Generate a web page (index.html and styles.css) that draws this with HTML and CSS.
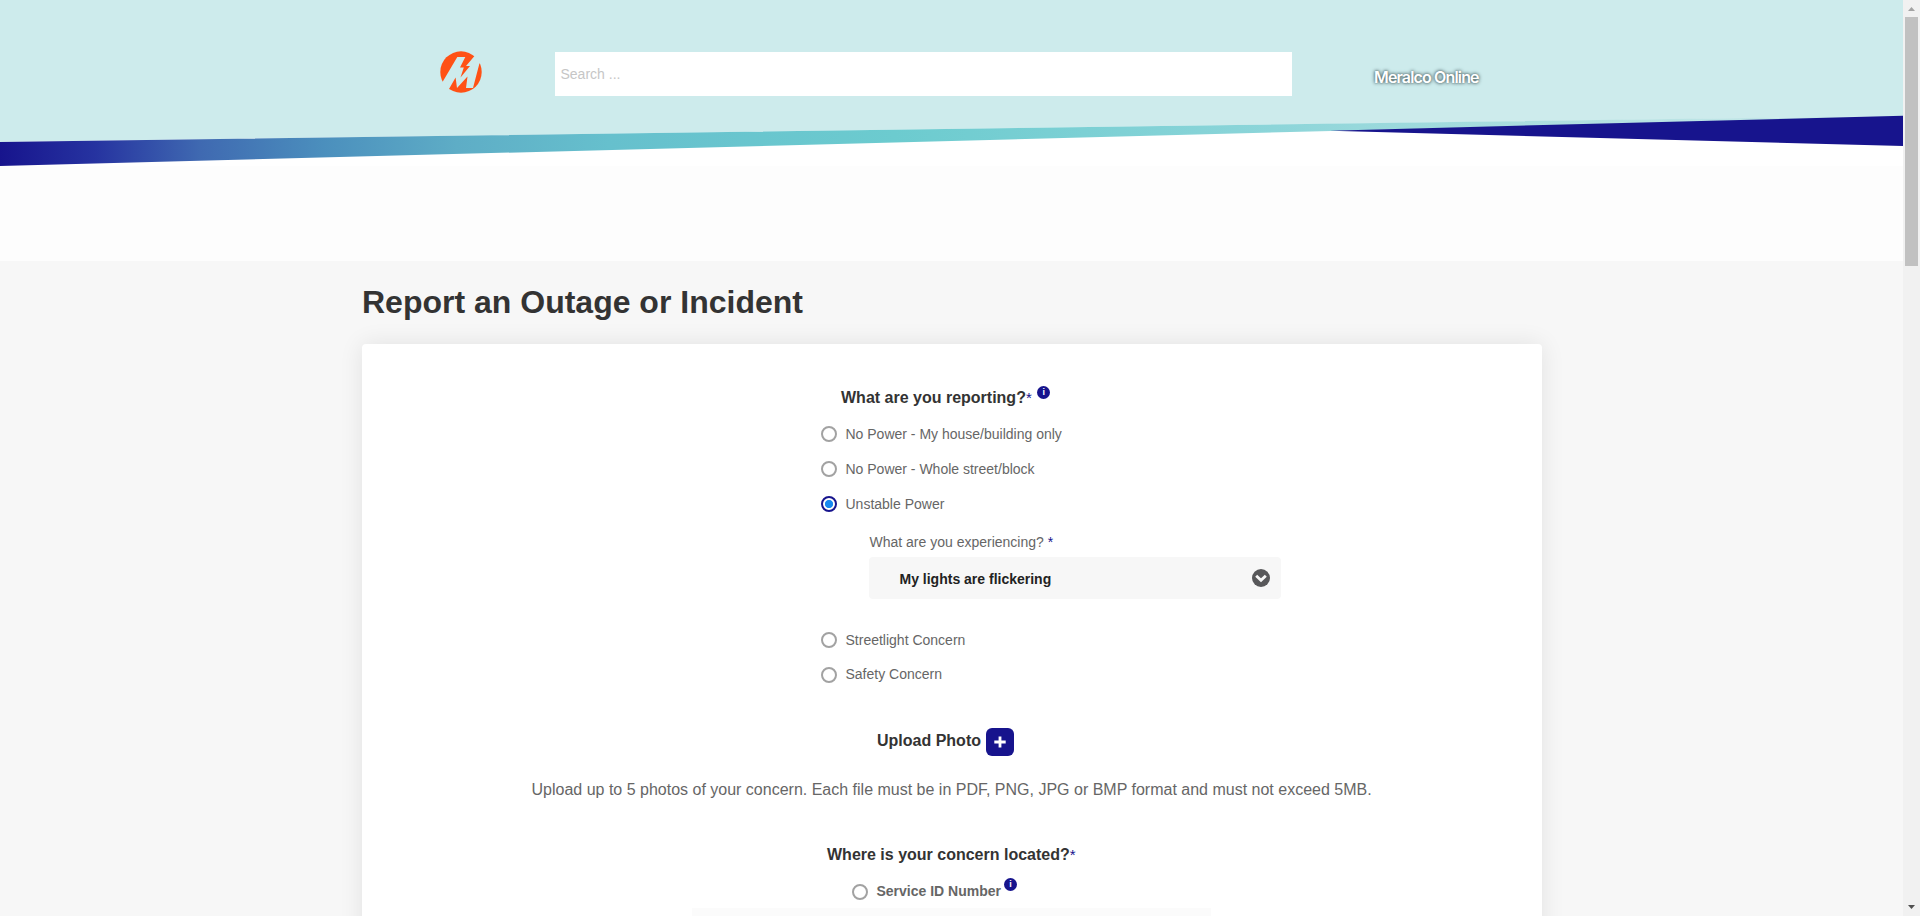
FILE: index.html
```html
<!DOCTYPE html>
<html lang="en">
<head>
<meta charset="utf-8">
<title>Report an Outage or Incident</title>
<link rel="stylesheet" href="styles.css">
</head>
<body>
<div class="window">
  <div class="page">
    <header class="header">
      <svg class="header-art" viewBox="0 0 1903 166" width="1903" height="166">
        <defs>
          <linearGradient id="band" x1="0" y1="0" x2="1903" y2="0" gradientUnits="userSpaceOnUse">
            <stop offset="0" stop-color="#17148d"/>
            <stop offset=".05" stop-color="#2633a0"/>
            <stop offset=".105" stop-color="#3f69b1"/>
            <stop offset=".17" stop-color="#4b8fbd"/>
            <stop offset=".24" stop-color="#5eadc6"/>
            <stop offset=".32" stop-color="#66c0cd"/>
            <stop offset=".47" stop-color="#6ccbcf"/>
            <stop offset=".67" stop-color="#8cd5d9"/>
            <stop offset=".82" stop-color="#b0dfe0"/>
            <stop offset="1" stop-color="#cdebec"/>
          </linearGradient>
        </defs>
        <path d="M0 0H1903V116L0 142Z" fill="#cdebec"/>
        <path d="M0 142L1903 115.7V117L1331 131L0 166Z" fill="url(#band)"/>
        <path d="M1330 130.7L1903 115.7V146Z" fill="#17148d"/>
      </svg>
      <div class="header-bar">
        <svg class="logo" viewBox="0 0 42 42" width="42" height="42">
          <circle cx="21" cy="21" r="20.7" fill="#ff5115"/>
          <path d="M-1 34L2.500 31L17.300 6H25.300L20 16.500H23.800L20.500 26.500L30 15H26L34.500 5L38 1L42 9L39.300 13L33 37H26L27.500 25.500L17 37L15.600 26.500L9 38L7 42Z" fill="#cdebec"/>
        </svg>
        <div class="search">Search ...</div>
        <div class="brand">Meralco Online</div>
      </div>
    </header>
    <main class="content">
      <h1 class="title">Report an Outage or Incident</h1>
      <section class="card">
        <h2 class="question q-report"><span>What are you reporting?</span><span class="req">*</span><span class="info">i</span></h2>
        <div class="options">
          <label class="option"><span class="radio"></span><span>No Power - My house/building only</span></label>
          <label class="option"><span class="radio"></span><span>No Power - Whole street/block</span></label>
          <label class="option"><span class="radio checked"></span><span>Unstable Power</span></label>
          <div class="detail">
            <div class="detail-label">What are you experiencing? <span class="blue">*</span></div>
            <div class="select">
              <span class="select-value">My lights are flickering</span>
              <svg viewBox="0 0 18 18" width="18" height="18"><circle cx="9" cy="9" r="9" fill="#58585a"/><path d="M4.200 6.800L9 11.300L13.800 6.800" fill="none" stroke="#f7f7f7" stroke-width="2.900"/></svg>
            </div>
          </div>
          <label class="option"><span class="radio"></span><span>Streetlight Concern</span></label>
          <label class="option"><span class="radio"></span><span class="raised">Safety Concern</span></label>
        </div>
        <div class="upload">
          <h2 class="question">Upload Photo</h2>
          <span class="add"><svg viewBox="0 0 12 12" width="12" height="12"><path d="M6 .5V11.500M.3 6H11.700" stroke="#fff" stroke-width="2.800"/></svg></span>
        </div>
        <p class="hint">Upload up to 5 photos of your concern. Each file must be in PDF, PNG, JPG or BMP format and must not exceed 5MB.</p>
        <h2 class="question q-where"><span>Where is your concern located?</span><span class="req">*</span></h2>
        <label class="option service"><span class="radio"></span><span class="raised">Service ID Number</span><span class="info">i</span></label>
        <div class="field"></div>
      </section>
    </main>
  </div>
  <div class="scrollbar">
    <svg viewBox="0 0 17 17" width="17" height="17"><path d="M5 11L8.500 7L12 11Z" fill="#a3a3a3"/></svg>
    <div class="thumb"></div>
    <svg viewBox="0 0 17 17" width="17" height="17"><path d="M5 6L8.500 10L12 6Z" fill="#505050"/></svg>
  </div>
</div>
</body>
</html>
```
FILE: styles.css
```css
* { box-sizing: border-box; }
body { margin: 0; font-family: "Liberation Sans", Arial, sans-serif; color: #333; }
.window { display: flex; width: 1920px; height: 916px; overflow: hidden; }
.page { width: 1903px; height: 916px; overflow: hidden; background: #f7f7f7; }
.header { position: relative; height: 261px; background: linear-gradient(#fff 166px, #fdfdfd 166px); }
.header-art { position: absolute; left: 0; top: 0; }
.header-bar { position: relative; display: flex; align-items: flex-start; padding: 51px 0 0 440px; }
.logo { display: block; }
.search { width: 737px; height: 44px; margin: 1px 82px 0 73px; padding-left: 5.5px; background: #fff; color: #c6c6c6; font-size: 14px; line-height: 44px; }
.brand { margin-top: 16px; font: 600 16px/20px "Inter", sans-serif; letter-spacing: -.85px; color: #fff; text-shadow: 0 0 3px #3f5558, 0 0 4px #6b8587; white-space: nowrap; }
.content { width: 1180px; margin: 0 0 0 362px; padding-top: 21px; }
.title { margin: 0 0 22px; height: 40px; line-height: 40px; font-size: 32px; white-space: nowrap; }
.card { height: 700px; padding-top: 44px; border-radius: 4px; background: #fff; box-shadow: 0 0 25px rgba(0,0,0,.09); }
.question { display: flex; margin: 0; height: 20px; font-size: 16px; line-height: 20px; white-space: nowrap; }
.q-report { padding-left: 479px; }
.req { color: #17148d; font-size: 15px; line-height: 19px; font-weight: 400; }
.info { width: 13px; height: 13px; margin: -2px 0 0 5.5px; border-radius: 50%; background: #17148d; color: #fff; font-size: 9px; line-height: 13px; font-weight: 700; text-align: center; }
.options { padding: 16px 0 0 459px; }
.option { display: flex; align-items: center; gap: 8.5px; height: 20px; margin-bottom: 15px; font-size: 14px; line-height: 20px; color: #666; white-space: nowrap; }
.radio { width: 16px; height: 16px; border: 2px solid #a2a2a2; border-radius: 50%; background: #fff; }
.radio.checked { border-color: #17148d; background: radial-gradient(circle, #1688f0 3.700px, #fff 4.500px); }
.raised { padding-bottom: 2px; }
.detail { padding: 3px 0 31px 48px; font-size: 14px; color: #666; }
.detail-label { height: 20px; margin-bottom: 5px; padding-left: .5px; line-height: 20px; }
.blue { color: #17148d; }
.select { display: flex; align-items: center; justify-content: space-between; width: 412px; height: 42px; padding: 0 11px 0 30.5px; border-radius: 4px; background: #f7f7f7; color: #222; font-weight: 700; }
.select-value { padding-top: 2px; }
.upload { display: flex; align-items: center; gap: 5px; height: 28px; margin-top: 43px; padding-left: 515px; }
.upload .question { height: 22px; }
.add { display: flex; align-items: center; justify-content: center; width: 28px; height: 28px; border-radius: 6px; background: #17148d; }
.hint { margin: 24px 0 0; height: 20px; padding-left: 169.5px; font-size: 16px; line-height: 20px; color: #666; white-space: nowrap; }
.q-where { margin-top: 45px; padding-left: 465px; }
.service { margin: 17px 0 0; padding-left: 490px; font-weight: 700; }
.service .info { margin: -16px 0 0 -5.5px; }
.field { width: 519px; height: 42px; margin: 6px 0 0 330px; background: #fbfbfb; }
.scrollbar { display: flex; flex-direction: column; width: 17px; height: 916px; background: #f1f1f1; }
.scrollbar svg { display: block; flex: none; }
.thumb { width: 13px; height: 249px; margin: 0 0 auto 2px; background: #c1c1c1; }
```
